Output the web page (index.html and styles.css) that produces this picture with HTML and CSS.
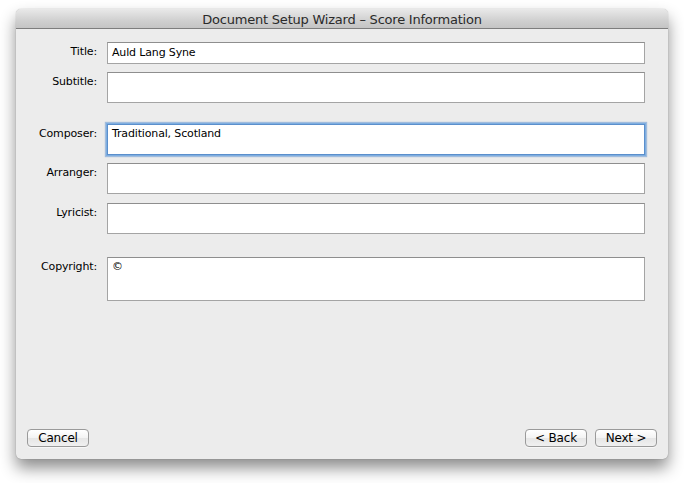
FILE: index.html
```html
<!DOCTYPE html>
<html>
<head>
<meta charset="utf-8">
<link rel="stylesheet" href="styles.css">
</head>
<body>
<div class="window">
  <div class="titlebar">Document Setup Wizard – Score Information</div>
  <div class="content">
    <div class="form">
      <div class="row r-title">
        <label class="lbl">Title:</label>
        <div class="field h22">Auld Lang Syne</div>
      </div>
      <div class="row r-subtitle">
        <label class="lbl">Subtitle:</label>
        <div class="field h31"></div>
      </div>
      <div class="row r-composer">
        <label class="lbl">Composer:</label>
        <div class="field h31 focus">Traditional, Scotland</div>
      </div>
      <div class="row r-arranger">
        <label class="lbl">Arranger:</label>
        <div class="field h31"></div>
      </div>
      <div class="row r-lyricist">
        <label class="lbl">Lyricist:</label>
        <div class="field h31"></div>
      </div>
      <div class="row r-copyright">
        <label class="lbl">Copyright:</label>
        <div class="field h44">©</div>
      </div>
    </div>
    <div class="buttons">
      <button class="btn">Cancel</button>
      <div class="right">
        <button class="btn">&lt; Back</button>
        <button class="btn">Next &gt;</button>
      </div>
    </div>
  </div>
</div>
</body>
</html>
```

FILE: styles.css
```css
html, body {
  margin: 0;
  padding: 0;
  background: #ffffff;
}
body {
  width: 684px;
  height: 483px;
  overflow: hidden;
  font-family: "DejaVu Sans", "Liberation Sans", sans-serif;
  font-size: 11px;
  letter-spacing: -0.15px;
  color: #000;
}
.window {
  margin: 9px 0 0 16px;
  width: 652px;
  height: 450px;
  background: #ececec;
  border-radius: 5px;
  box-shadow: 0 9px 16px rgba(0,0,0,0.45), 0 0 1px rgba(0,0,0,0.4);
  display: flex;
  flex-direction: column;
  overflow: hidden;
}
.titlebar {
  height: 19px;
  border-bottom: 1px solid #7d7d7d;
  background: linear-gradient(#e9e9e9, #d0d0d0 60%, #c4c4c4);
  text-align: center;
  font-size: 13px;
  letter-spacing: -0.22px;
  line-height: 21px;
  color: #2a2a2a;
}
.content {
  flex: 1;
  display: flex;
  flex-direction: column;
  justify-content: space-between;
  padding: 13px 23px 12px 0;
}
.form {
  display: flex;
  flex-direction: column;
}
.row {
  display: grid;
  grid-template-columns: 81px 1fr;
  column-gap: 10px;
  align-items: start;
}
.r-subtitle { margin-top: 8px; }
.r-composer { margin-top: 21px; }
.r-arranger { margin-top: 8px; }
.r-lyricist { margin-top: 9px; }
.r-copyright { margin-top: 23px; }
.lbl {
  text-align: right;
  padding-top: 3px;
  line-height: 14px;
  white-space: nowrap;
}
.field {
  box-sizing: border-box;
  background: #fff;
  border: 1px solid #a4a4a4;
  border-top-color: #8e8e8e;
  padding: 2px 4px 0 4px;
  line-height: 14px;
}
.h22 { height: 22px; padding-top: 3px; }
.h31 { height: 31px; }
.h44 { height: 44px; }
.field.focus {
  border: 1px solid #5b8fcc;
  box-shadow: 0 0 0 1px #7eaee0, 0 0 1px 2px rgba(100,150,210,0.55);
  padding-top: 2px;
}
.buttons {
  display: flex;
  justify-content: space-between;
  align-items: flex-end;
  padding-left: 11px;
  margin-right: -12px;
}
.right {
  display: flex;
  gap: 8px;
}
.btn {
  box-sizing: border-box;
  width: 62px;
  height: 18px;
  padding: 0;
  font-family: "DejaVu Sans", "Liberation Sans", sans-serif;
  font-size: 12px;
  letter-spacing: -0.2px;
  line-height: 16px;
  color: #000;
  background: linear-gradient(#ffffff, #f3f3f3 50%, #e6e6e6 51%, #f0f0f0);
  border: 1px solid #9a9a9a;
  border-radius: 4px;
  box-shadow: 0 1px 0 rgba(255,255,255,0.6);
}
```
